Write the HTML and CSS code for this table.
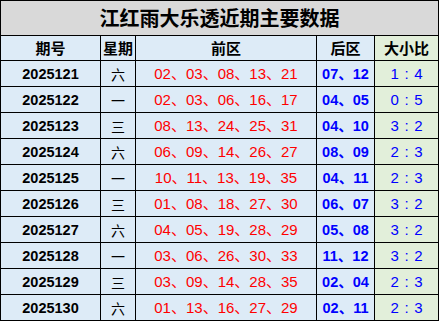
FILE: index.html
```html
<!DOCTYPE html>
<html>
<head>
<meta charset="utf-8">
<link rel="stylesheet" href="styles.css">
</head>
<body>
<table class="grid">
  <colgroup>
    <col class="c1"><col class="c2"><col class="c3"><col class="c4"><col class="c5">
  </colgroup>
  <tr class="title-row"><td colspan="5" class="title">江红雨大乐透近期主要数据</td></tr>
  <tr class="head-row">
    <td>期号</td><td>星期</td><td>前区</td><td>后区</td><td class="ratio-h">大小比</td>
  </tr>
  <tr><td class="issue">2025121</td><td class="wd">六</td><td class="front">02、03、08、13、21</td><td class="back">07、12</td><td class="ratio">1 : 4</td></tr>
  <tr><td class="issue">2025122</td><td class="wd">一</td><td class="front">02、03、06、16、17</td><td class="back">04、05</td><td class="ratio">0 : 5</td></tr>
  <tr><td class="issue">2025123</td><td class="wd">三</td><td class="front">08、13、24、25、31</td><td class="back">04、10</td><td class="ratio">3 : 2</td></tr>
  <tr><td class="issue">2025124</td><td class="wd">六</td><td class="front">06、09、14、26、27</td><td class="back">08、09</td><td class="ratio">2 : 3</td></tr>
  <tr><td class="issue">2025125</td><td class="wd">一</td><td class="front">10、11、13、19、35</td><td class="back">04、11</td><td class="ratio">2 : 3</td></tr>
  <tr><td class="issue">2025126</td><td class="wd">三</td><td class="front">01、08、18、27、30</td><td class="back">06、07</td><td class="ratio">3 : 2</td></tr>
  <tr><td class="issue">2025127</td><td class="wd">六</td><td class="front">04、05、19、28、29</td><td class="back">05、08</td><td class="ratio">3 : 2</td></tr>
  <tr><td class="issue">2025128</td><td class="wd">一</td><td class="front">03、06、26、30、33</td><td class="back">11、12</td><td class="ratio">3 : 2</td></tr>
  <tr><td class="issue">2025129</td><td class="wd">三</td><td class="front">03、09、14、28、35</td><td class="back">02、04</td><td class="ratio">2 : 3</td></tr>
  <tr><td class="issue">2025130</td><td class="wd">六</td><td class="front">01、13、16、27、29</td><td class="back">02、11</td><td class="ratio">2 : 3</td></tr>
</table>
</body>
</html>
```
FILE: styles.css
```css
html, body {
  margin: 0;
  padding: 0;
  background: #ffffff;
}
.grid {
  width: 438px;
  border-collapse: collapse;
  table-layout: fixed;
  font-family: "Liberation Sans", "Noto Sans CJK SC", sans-serif;
  font-size: 14px;
  color: #000;
}
.c1 { width: 100px; }
.c2 { width: 35px; }
.c3 { width: 181px; }
.c4 { width: 58px; }
.c5 { width: 64px; }
.grid td {
  border: 1px solid #000;
  padding: 0;
  text-align: center;
  vertical-align: middle;
  background: #ddebf7;
  height: 25px;
  line-height: 16px;
}
.grid tr.title-row td {
  height: 34px;
  background: #d9d9d9;
  font-family: "Noto Sans CJK SC", sans-serif;
  font-size: 20px;
  font-weight: bold;
  line-height: 24px;
}
.grid tr.head-row td {
  height: 24px;
  font-family: "Noto Sans CJK SC", sans-serif;
  font-size: 15px;
  font-weight: bold;
}
.grid tr.head-row td.ratio-h {
  background: #e2efda;
}
.issue {
  font-weight: bold;
  font-size: 14.5px;
}
.grid td.wd {
  font-family: "Noto Sans CJK SC", sans-serif;
  font-size: 14px;
}
.front {
  color: #ff0000;
  font-size: 15px;
}
.back {
  color: #0000ff;
  font-weight: bold;
  font-size: 14.5px;
}
.grid td.ratio {
  color: #0000ff;
  background: #e2efda;
  font-size: 15px;
  white-space: pre;
  word-spacing: 1.5px;
}
```
